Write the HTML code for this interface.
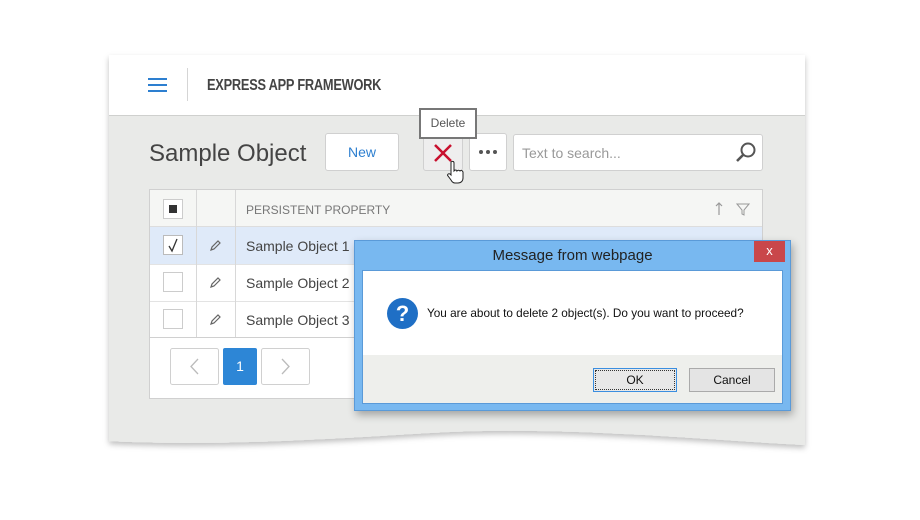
<!DOCTYPE html>
<html><head><style>
*{margin:0;padding:0;box-sizing:border-box}
body{width:920px;height:520px;background:#fff;position:relative;overflow:hidden;font-family:"Liberation Sans",sans-serif}
.a{position:absolute}
</style></head><body>
<svg class="a" style="left:0;top:0" width="920" height="520">
<defs><filter id="sh" x="-5%" y="-5%" width="110%" height="115%"><feDropShadow dx="0" dy="3" stdDeviation="3" flood-color="#000" flood-opacity="0.25"/></filter></defs>
<path d="M109 55 H805 V445 C700 440 560 425 430 433 C300 441 200 446 109 441 Z" fill="#e9eae8" filter="url(#sh)"/>
<rect x="109" y="55" width="696" height="60" fill="#fff"/>
<line x1="109" y1="115.5" x2="805" y2="115.5" stroke="#cfd0ce"/>
</svg>
<div class="a" style="left:148px;top:78px;width:19px;height:2px;background:#2d7fd0;box-shadow:0 6px 0 #2d7fd0,0 12px 0 #2d7fd0"></div>
<div class="a" style="left:187px;top:68px;width:1px;height:33px;background:#d5d5d5"></div>
<div class="a" style="left:207px;top:77px;font-size:16px;font-weight:bold;color:#444;letter-spacing:-0.3px;transform:scaleX(0.8);transform-origin:left;white-space:nowrap">EXPRESS APP FRAMEWORK</div>
<div class="a" style="left:149px;top:140px;font-size:24px;color:#444">Sample Object</div>
<div class="a" style="left:325px;top:133px;width:74px;height:38px;background:#fff;border:1px solid #d0d0d0;border-radius:3px;color:#2d7fd0;font-size:14px;text-align:center;line-height:36px">New</div>
<div class="a" style="left:423px;top:133px;width:40px;height:38px;background:#eeeeee;border:1px solid #d0d0d0;border-radius:3px"></div>
<svg class="a" style="left:433px;top:143px" width="20" height="20"><path d="M2 2L18 18M18 2L2 18" stroke="#c8102e" stroke-width="2.5"/></svg>
<div class="a" style="left:469px;top:133px;width:38px;height:38px;background:#fff;border:1px solid #d0d0d0;border-radius:3px"></div>
<svg class="a" style="left:478px;top:149px" width="20" height="6"><circle cx="3" cy="3" r="2" fill="#555"/><circle cx="10" cy="3" r="2" fill="#555"/><circle cx="17" cy="3" r="2" fill="#555"/></svg>
<div class="a" style="left:419px;top:108px;width:58px;height:31px;background:#fff;border:2px solid #777;font-size:12px;color:#555;text-align:center;line-height:27px">Delete</div>
<svg class="a" style="left:446px;top:160px" width="20" height="26"><path d="M5 2c1-1 3-1 3 1v8l1-1c1 0 2 0 2 1c1-1 2-1 3 0c1-1 2-1 3 1v6c0 3-2 5-5 5h-3c-2 0-3-1-4-3l-3-4c-1-1 0-3 2-2l1 1V3z" fill="#fff" stroke="#222" stroke-width="1"/></svg>
<div class="a" style="left:513px;top:134px;width:250px;height:37px;background:#fff;border:1px solid #d0d0d0;border-radius:3px;font-size:14px;color:#999;padding:10px 0 0 8px">Text to search...</div>
<svg class="a" style="left:734px;top:141px" width="24" height="24"><circle cx="14" cy="9" r="6.5" fill="none" stroke="#555" stroke-width="2"/><path d="M9.5 13.5L3 20" stroke="#555" stroke-width="2.6"/></svg>
<!-- grid -->
<div class="a" style="left:149px;top:189px;width:614px;height:210px;background:#fff;border:1px solid #d0d0d0"></div>
<div class="a" style="left:150px;top:190px;width:612px;height:37px;background:#f5f6f4;border-bottom:1px solid #ddd"></div>
<div class="a" style="left:150px;top:227px;width:612px;height:37px;background:#dfeaf9"></div>
<div class="a" style="left:150px;top:264px;width:612px;height:1px;background:#e3e3e3"></div>
<div class="a" style="left:150px;top:301px;width:612px;height:1px;background:#e3e3e3"></div>
<div class="a" style="left:150px;top:337px;width:612px;height:1px;background:#d0d0d0"></div>
<div class="a" style="left:196px;top:190px;width:1px;height:147px;background:#d8d8d8"></div>
<div class="a" style="left:235px;top:190px;width:1px;height:147px;background:#d8d8d8"></div>
<div class="a" style="left:163px;top:199px;width:20px;height:20px;background:#fff;border:1px solid #ccc"></div>
<div class="a" style="left:169px;top:205px;width:8px;height:8px;background:#333"></div>
<div class="a" style="left:163px;top:235px;width:20px;height:20px;background:#fff;border:1px solid #bbb"></div>
<svg class="a" style="left:163px;top:235px" width="20" height="20"><path d="M6 11L9 16L14 4" fill="none" stroke="#333" stroke-width="1.3"/></svg>
<div class="a" style="left:163px;top:272px;width:20px;height:20px;background:#fff;border:1px solid #ccc"></div>
<div class="a" style="left:163px;top:309px;width:20px;height:20px;background:#fff;border:1px solid #ccc"></div>
<svg class="a" style="left:209px;top:239px" width="12" height="90"><g fill="none" stroke="#666" stroke-width="1.2"><path d="M2 11l1-3 6-6 2 2-6 6z"/><path d="M2 48l1-3 6-6 2 2-6 6z"/><path d="M2 85l1-3 6-6 2 2-6 6z"/></g></svg>
<div class="a" style="left:246px;top:203px;font-size:12px;color:#777">PERSISTENT PROPERTY</div>
<svg class="a" style="left:714px;top:202px" width="10" height="14"><path d="M5 1V13M2 4L5 1L8 4" fill="none" stroke="#999" stroke-width="1.2"/></svg>
<svg class="a" style="left:736px;top:203px" width="14" height="13"><path d="M1 1H13L8 7V12L6 11V7Z" fill="none" stroke="#999"/></svg>
<div class="a" style="left:246px;top:238px;font-size:14px;color:#444">Sample Object 1</div>
<div class="a" style="left:246px;top:275px;font-size:14px;color:#444">Sample Object 2</div>
<div class="a" style="left:246px;top:312px;font-size:14px;color:#444">Sample Object 3</div>
<svg class="a" style="left:170px;top:348px" width="49" height="37"><rect x=".5" y=".5" width="48" height="36" rx="2" fill="#fff" stroke="#d0d0d0"/><path d="M28 11L21 18.5L28 26" fill="none" stroke="#bbb" stroke-width="1.3"/></svg>
<div class="a" style="left:223px;top:348px;width:34px;height:37px;background:#2d86d6;border-radius:2px;color:#fff;font-size:14px;text-align:center;line-height:37px">1</div>
<svg class="a" style="left:261px;top:348px" width="49" height="37"><rect x=".5" y=".5" width="48" height="36" rx="2" fill="#fff" stroke="#d0d0d0"/><path d="M21 11L28 18.5L21 26" fill="none" stroke="#bbb" stroke-width="1.3"/></svg>
<!-- dialog -->
<div class="a" style="left:354px;top:240px;width:437px;height:171px;background:#78b8f0;border:1px solid #5a9ad8;box-shadow:2px 4px 8px rgba(0,0,0,0.3)"></div>
<div class="a" style="left:354px;top:247px;width:437px;text-align:center;font-size:15px;color:#222">Message from webpage</div>
<div class="a" style="left:754px;top:241px;width:31px;height:21px;background:#c9474a;color:#fff;font-size:13px;text-align:center;line-height:20px">x</div>
<div class="a" style="left:362px;top:270px;width:421px;height:134px;background:#eeefec;border:1px solid #5a9ad8"></div>
<div class="a" style="left:363px;top:271px;width:419px;height:84px;background:#fff"></div>
<div class="a" style="left:387px;top:298px;width:31px;height:31px;border-radius:50%;background:#1f6fc5;color:#fff;font-size:22px;font-weight:bold;text-align:center;line-height:31px">?</div>
<div class="a" style="left:427px;top:306px;font-size:12px;color:#111;transform:scaleX(0.98);transform-origin:left;white-space:nowrap">You are about to delete 2 object(s). Do you want to proceed?</div>
<div class="a" style="left:593px;top:368px;width:84px;height:24px;background:#e8e8e8;border:1px solid #3a8ee0;outline:1px dotted #333;outline-offset:-3px;font-size:12px;text-align:center;line-height:22px;color:#111">OK</div>
<div class="a" style="left:689px;top:368px;width:86px;height:24px;background:#e4e4e4;border:1px solid #aaa;font-size:12px;text-align:center;line-height:22px;color:#111">Cancel</div>
</body></html>
